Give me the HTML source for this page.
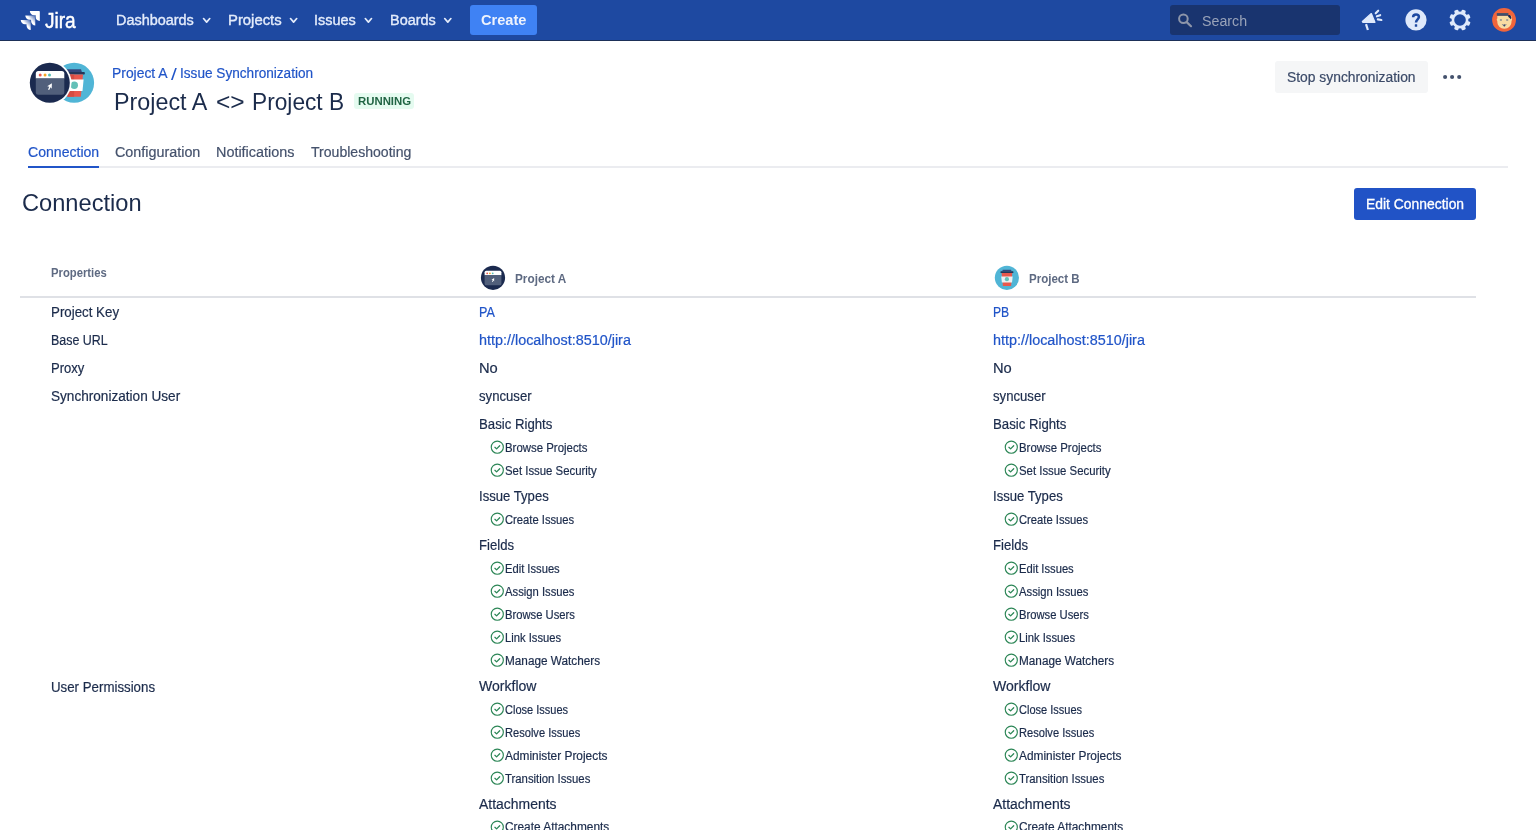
<!DOCTYPE html>
<html lang="en">
<head>
<meta charset="utf-8">
<title>Project A &lt;&gt; Project B - Issue Synchronization - Jira</title>
<style>
html,body{margin:0;padding:0;}
body{width:1536px;height:830px;overflow:hidden;background:#fff;position:relative;font-family:"Liberation Sans",sans-serif;color:#1b2b4b;font-size:14px;}
.abs{position:absolute;}
#layer{position:absolute;left:0;top:0;width:1536px;height:830px;will-change:transform;}
#nav{position:absolute;left:0;top:0;width:1536px;height:40px;background:#1e49a1;}
#navline{position:absolute;left:0;top:40px;width:1536px;height:1px;background:#1d3058;}
.t{position:absolute;display:block;margin:0;padding:0;font-weight:normal;text-decoration:none;white-space:nowrap;line-height:20px;transform-origin:0 0;}
.wrap{position:absolute;left:0;top:0;margin:0;padding:0;font-weight:normal;font-size:14px;}
.nv{color:#e4ecfb;font-size:14px;-webkit-text-stroke:0.35px #e4ecfb;}
.logo{color:#fff;font-size:22px;line-height:24px;-webkit-text-stroke:0.45px #fff;}
.cr{color:#eef3fd;font-size:14px;font-weight:bold;}
.se{color:#99a3b9;font-size:14px;}
.bc{color:#2155c8;font-size:14px;-webkit-text-stroke:0.2px #2155c8;}
.sl{font-size:16.5px;-webkit-text-stroke:0;}
.ti{font-size:24.5px;line-height:30px;color:#1b2b4b;}
.lz{font-size:11.7px;font-weight:bold;color:#216544;line-height:16px;}
.bt{font-size:14px;color:#3b4a68;-webkit-text-stroke:0.2px #3b4a68;}
.bp{font-size:14px;color:#fff;-webkit-text-stroke:0.3px #fff;}
.tba{font-size:14px;color:#2155c8;-webkit-text-stroke:0.2px #2155c8;}
.tb{font-size:14px;color:#45526c;-webkit-text-stroke:0.2px #45526c;}
.h1{font-size:24px;line-height:30px;color:#1b2b4b;}
.th{font-size:12px;font-weight:bold;color:#5e6a82;}
.h{font-size:14px;color:#1b2b4b;-webkit-text-stroke:0.2px #1b2b4b;}
.lk{font-size:14px;color:#2155c8;-webkit-text-stroke:0.2px #2155c8;}
.p{font-size:12px;color:#1b2b4b;-webkit-text-stroke:0.2px #1b2b4b;}
.ck{position:absolute;width:16px;height:16px;overflow:visible;}
</style>
</head>
<body>
<div id="nav"></div><div id="navline"></div>
<div id="layer">
<!-- Jira logo -->
<svg class="abs" style="left:20px;top:11px" width="20" height="19" viewBox="-0.9 0 25.13 24" preserveAspectRatio="none">
 <defs>
  <linearGradient id="lg1" x1="0.98" y1="0.02" x2="0.55" y2="0.45"><stop offset="0.15" stop-color="#fff" stop-opacity="0.3"/><stop offset="1" stop-color="#fff" stop-opacity="1"/></linearGradient>
 </defs>
 <path fill="#fff" d="M23.013 0H11.455a5.215 5.215 0 0 0 5.215 5.215h2.129v2.057A5.215 5.215 0 0 0 24 12.483V1.005A1.001 1.001 0 0 0 23.013 0z"/>
 <path fill="url(#lg1)" d="M17.294 5.757H5.736a5.215 5.215 0 0 0 5.215 5.214h2.129v2.058a5.218 5.218 0 0 0 5.215 5.214V6.758a1.001 1.001 0 0 0-1.001-1.001z"/>
 <path fill="url(#lg1)" d="M11.571 11.513H0a5.218 5.218 0 0 0 5.232 5.215h2.130v2.057A5.215 5.215 0 0 0 12.575 24V12.518a1.005 1.005 0 0 0-1.005-1.005z"/>
</svg>
<!-- nav chevrons -->
<svg class="abs" style="left:0;top:0" width="600" height="40" viewBox="0 0 600 40"><g fill="none" stroke="#e4ecfb" stroke-width="1.700" stroke-linecap="round" stroke-linejoin="round"><path d="M203.55 18.55L206.65 22.1L209.75 18.55"/><path d="M290.50 18.55L293.60 22.1L296.70 18.55"/><path d="M365.30 18.55L368.40 22.1L371.50 18.55"/><path d="M444.70 18.55L447.80 22.1L450.90 18.55"/></g></svg>
<!-- create button -->
<div class="abs" style="left:470px;top:5px;width:67px;height:30px;border-radius:3px;background:#3f82f4"></div>
<!-- search box -->
<div class="abs" style="left:1170px;top:5px;width:170px;height:30px;border-radius:3px;background:#19346f"></div>
<svg class="abs" style="left:1176px;top:11px" width="18" height="18" viewBox="0 0 18 18"><circle cx="7.400" cy="7.800" r="4.300" fill="none" stroke="#8d95a9" stroke-width="2"/><path d="M10.700 11.100L15 15.200" stroke="#8d95a9" stroke-width="2.200" stroke-linecap="round"/></svg>
<!-- megaphone -->
<svg class="abs" style="left:1356px;top:4px" width="32" height="32" viewBox="0 0 32 32">
 <g fill="#dfe9fb" stroke="#dfe9fb" stroke-linejoin="round" stroke-linecap="round">
  <path d="M6.400 17.400L15.300 9.600L18.900 18.300L6.800 18.300Z" stroke-width="1.300"/>
  <path d="M10 20.100L11.900 26" stroke-width="2.200" fill="none" stroke-linecap="butt"/>
  <path d="M19.700 9.300L22.200 6.700" stroke-width="2.100" fill="none"/>
  <path d="M20.900 12.300L24.200 11.200" stroke-width="2.100" fill="none"/>
  <path d="M21.800 15.400L25.400 16" stroke-width="2.100" fill="none"/>
 </g>
</svg>
<!-- help -->
<svg class="abs" style="left:1404px;top:8px" width="24" height="24" viewBox="0 0 24 24">
 <circle cx="12" cy="11.900" r="10.600" fill="#dfe9fb"/>
 <path d="M9.100 9.300C9.100 7.500 10.400 6.500 12 6.500C13.700 6.500 14.900 7.500 14.900 9C14.900 11.200 12 11.500 12 14.400" fill="none" stroke="#1e49a1" stroke-width="2.500" stroke-linecap="butt"/>
 <rect x="10.800" y="16.300" width="2.400" height="2.400" rx="0.300" fill="#1e49a1"/>
</svg>
<!-- gear -->
<svg class="abs" style="left:1448px;top:8px" width="24" height="24" viewBox="-12 -12 24 24">
 <g fill="#dfe9fb">
  <g id="teeth">
   <rect x="-2.100" y="-10.650" width="4.200" height="21.300" rx="1" transform="rotate(22.500)"/>
   <rect x="-2.100" y="-10.650" width="4.200" height="21.300" rx="1" transform="rotate(67.500)"/>
   <rect x="-2.100" y="-10.650" width="4.200" height="21.300" rx="1" transform="rotate(112.500)"/>
   <rect x="-2.100" y="-10.650" width="4.200" height="21.300" rx="1" transform="rotate(157.500)"/>
  </g>
  <circle cx="0" cy="0" r="8.400"/>
 </g>
 <circle cx="0" cy="0" r="5.800" fill="#1e49a1"/>
</svg>
<!-- user avatar -->
<svg class="abs" style="left:1492px;top:8px" width="24" height="24" viewBox="0 0 24 24">
 <circle cx="12.050" cy="11.900" r="11.900" fill="#f0653b"/>
 <path d="M5.300 7.800H19.500V10.600C20.200 10.700 20.300 12.700 19.500 12.900V13.500C19.500 17.700 16.400 20.700 12.400 20.700C8.400 20.700 5.300 17.700 5.300 13.500V12.900C4.500 12.700 4.600 10.700 5.300 10.600Z" fill="#f8dca2"/>
 <rect x="4.800" y="5.100" width="11.600" height="2.700" fill="#3d4f6d"/>
 <path d="M16.200 7H17.800C19.200 7.600 19.500 9.400 18.900 11.300L16.200 8.700Z" fill="#1b2a52"/>
 <rect x="7.900" y="11" width="2" height="2" fill="#a3a096"/>
 <rect x="14.200" y="11" width="2" height="2" fill="#a3a096"/>
 <path d="M9.800 16L12.300 19L14.800 16L13.700 16.300L12.300 17.300L10.900 16.300Z" fill="#6b7488"/>
 <rect x="11.800" y="16.300" width="1" height="1.600" fill="#2b3a5e"/>
</svg>
<!-- header avatars -->
<svg class="abs" style="left:26px;top:59px" width="72" height="48" viewBox="0 0 72 48">
 <!-- B -->
 <clipPath id="cb"><circle cx="48.100" cy="23.800" r="20"/></clipPath>
 <circle cx="48.100" cy="23.800" r="20" fill="#50b5d6"/>
 <g clip-path="url(#cb)">
  <path d="M41.200 10.200H55L55.900 12.900H40.300Z" fill="#34477c"/>
  <rect x="37.400" y="12.900" width="21.400" height="2.600" rx="0.800" fill="#243759"/>
  <path d="M39.200 15.500H57L54.800 37.700H41.400Z" fill="#e9584d"/>
  <path d="M39.200 15.500H48.100V37.700H41.400Z" fill="#d44d43"/>
  <path d="M38.600 20.500H57.600L56.500 32.100H39.700Z" fill="#fff"/>
  <circle cx="48.300" cy="26.200" r="3.700" fill="#63c0b8"/>
 </g>
 <!-- A -->
 <circle cx="23.800" cy="23.800" r="21.700" fill="#fff"/>
 <circle cx="23.800" cy="23.800" r="20" fill="#1b2a4f"/>
 <path d="M9.800 14.400a2.500 2.500 0 0 1 2.500-2.500h23.500a2.500 2.500 0 0 1 2.500 2.500V19.500H9.800Z" fill="#fff"/>
 <path d="M9.800 19.500H38.300V33.300a2.500 2.500 0 0 1-2.500 2.500H12.300a2.500 2.500 0 0 1-2.500-2.500Z" fill="#515f7b"/>
 <circle cx="14.200" cy="16.100" r="1.500" fill="#ea5a4e"/>
 <circle cx="19.050" cy="16.100" r="1.500" fill="#f5a623"/>
 <circle cx="23.500" cy="16.100" r="1.500" fill="#58c0b6"/>
 <path d="M25.900 24.200L21.200 27.200L23.300 27.700L22 30.600L23.200 30.900L24.500 28.300L25.700 29.800Z" fill="#fff"/>
</svg>
<!-- lozenge -->
<div class="abs" style="left:354px;top:93px;width:60px;height:16px;border-radius:3px;background:#e5fbf0"></div>
<!-- Stop sync button -->
<div class="abs" style="left:1275px;top:61px;width:153px;height:32px;border-radius:3px;background:#f5f6f7"></div>
<svg class="abs" style="left:1440px;top:72px" width="24" height="10" viewBox="0 0 24 10"><g fill="#44526d"><circle cx="5.100" cy="5" r="2.050"/><circle cx="12.100" cy="5" r="2.050"/><circle cx="19.200" cy="5" r="2.050"/></g></svg>
<!-- tabs line -->
<div class="abs" style="left:28px;top:166px;width:1480px;height:2px;background:#ebecf0"></div>
<div class="abs" style="left:28px;top:166px;width:71px;height:2px;background:#2155c8"></div>
<!-- Edit connection -->
<div class="abs" style="left:1354px;top:188px;width:122px;height:32px;border-radius:3px;background:#2153c6"></div>
<!-- table header avatars -->
<svg class="abs" style="left:480px;top:265px" width="26" height="26" viewBox="0 0 26 26">
 <circle cx="13" cy="12.800" r="12.100" fill="#1b2a4f"/>
 <path d="M4.600 7.300a1.500 1.500 0 0 1 1.500-1.500h13.800a1.500 1.500 0 0 1 1.500 1.500V10.300H4.600Z" fill="#fff"/>
 <path d="M4.600 10.300H21.400V18.700a1.500 1.500 0 0 1-1.500 1.500H6.100a1.500 1.500 0 0 1-1.500-1.500Z" fill="#515f7b"/>
 <circle cx="7.200" cy="8.300" r="0.900" fill="#ea5a4e"/>
 <circle cx="9.900" cy="8.300" r="0.900" fill="#f5a623"/>
 <circle cx="12.700" cy="8.300" r="0.900" fill="#58c0b6"/>
 <path d="M14.200 13.100L11.500 14.800L12.700 15.100L12 16.800L12.700 17L13.400 15.500L14.100 16.400Z" fill="#fff"/>
</svg>
<svg class="abs" style="left:994px;top:265px" width="26" height="26" viewBox="0 0 26 26">
 <circle cx="12.900" cy="12.800" r="12.100" fill="#50b5d6"/>
 <path d="M8.800 4.700H17L17.600 6.300H8.200Z" fill="#34477c"/>
 <rect x="6.500" y="6.200" width="12.900" height="1.700" rx="0.500" fill="#243759"/>
 <path d="M7.600 7.900H18.300L17.100 21.100H8.900Z" fill="#e9584d"/>
 <path d="M7.200 11.500H18.700L18 17.400H7.900Z" fill="#ecf1f4"/>
 <circle cx="12.900" cy="14.200" r="2.100" fill="#63c0b8"/>
</svg>
<!-- table header border -->
<div class="abs" style="left:20px;top:296px;width:1456px;height:2px;background:#dfe1e6"></div>

<a class="t logo" id="logo" style="left:44.80px;top:9.00px;transform:scaleX(0.8667)">Jira</a>
<a class="t nv" id="n1" style="left:116.15px;top:10.00px;transform:scaleX(1.0311)">Dashboards</a>
<a class="t nv" id="n2" style="left:227.74px;top:10.00px;transform:scaleX(1.0614)">Projects</a>
<a class="t nv" id="n3" style="left:314.12px;top:10.00px;transform:scaleX(1.0320)">Issues</a>
<a class="t nv" id="n4" style="left:389.81px;top:10.00px;transform:scaleX(1.0311)">Boards</a>
<span class="t cr" id="create" style="left:480.73px;top:10.00px;transform:scaleX(1.0425)">Create</span>
<label class="t se" id="search" style="left:1202.12px;top:11.00px;transform:scaleX(1.0162)">Search</label>
<div class="wrap"><div class="t bc" id="bc1" style="left:112.06px;top:63.00px;transform:scaleX(0.9915)">Project A</div>
<div class="t bc sl" id="bc2" style="left:170.96px;top:64.00px;transform:scaleX(1.2675)">/</div>
<div class="t bc" id="bc3" style="left:180.25px;top:63.00px;transform:scaleX(0.9720)">Issue Synchronization</div></div>
<h1 class="wrap"><span class="t ti" id="ti1" style="left:114.20px;top:87.00px;transform:scaleX(0.9513)">Project A</span>
<span class="t ti" id="ti2" style="left:215.84px;top:87.00px;transform:scaleX(1.0017)">&lt;&gt;</span>
<span class="t ti" id="ti3" style="left:251.82px;top:87.00px;transform:scaleX(0.9268)">Project B</span></h1>
<span class="t lz" id="loz" style="left:358.14px;top:93.00px;transform:scaleX(0.9734)">RUNNING</span>
<span class="t bt" id="stop" style="left:1286.82px;top:67.00px;transform:scaleX(0.9890)">Stop synchronization</span>
<a class="t tba" id="tab1" style="left:27.54px;top:142.00px;transform:scaleX(1.0048)">Connection</a>
<a class="t tb" id="tab2" style="left:114.78px;top:142.00px;transform:scaleX(1.0248)">Configuration</a>
<a class="t tb" id="tab3" style="left:215.68px;top:142.00px;transform:scaleX(1.0290)">Notifications</a>
<a class="t tb" id="tab4" style="left:310.80px;top:142.00px;transform:scaleX(1.0049)">Troubleshooting</a>
<h2 class="t h1" id="h1" style="left:22.45px;top:188.00px;transform:scaleX(0.9849)">Connection</h2>
<span class="t bp" id="edit" style="left:1365.50px;top:194.00px;transform:scaleX(0.9925)">Edit Connection</span>
<div class="t th" id="th1" style="left:51.14px;top:263.00px;transform:scaleX(0.9396)">Properties</div>
<div class="t th" id="th2" style="left:514.78px;top:269.00px;transform:scaleX(0.9820)">Project A</div>
<div class="t th" id="th3" style="left:1028.78px;top:269.00px;transform:scaleX(0.9610)">Project B</div>
<div class="t h" id="l1" style="left:51.04px;top:302.00px;transform:scaleX(0.9506)">Project Key</div>
<div class="t h" id="l2" style="left:51.04px;top:330.00px;transform:scaleX(0.8883)">Base URL</div>
<div class="t h" id="l3" style="left:51.04px;top:358.00px;transform:scaleX(0.9320)">Proxy</div>
<div class="t h" id="l4" style="left:51.20px;top:386.00px;transform:scaleX(0.9710)">Synchronization User</div>
<div class="t h" id="l5" style="left:51.02px;top:677.00px;transform:scaleX(0.9483)">User Permissions</div>
<a class="t lk" id="akey" style="left:478.84px;top:302.00px;transform:scaleX(0.8973)">PA</a>
<a class="t lk" id="aurl" style="left:478.70px;top:330.00px;transform:scaleX(1.0271)">http://localhost:8510/jira</a>
<div class="t h" id="ano" style="left:478.81px;top:358.00px;transform:scaleX(1.0474)">No</div>
<div class="t h" id="asu" style="left:479.34px;top:386.00px;transform:scaleX(0.9385)">syncuser</div>
<div class="t h" id="ag0" style="left:478.54px;top:414.00px;transform:scaleX(0.9431)">Basic Rights</div>
<div class="t p" id="ag0i0" style="left:505.05px;top:438.00px;transform:scaleX(0.9514)">Browse Projects</div>
<div class="t p" id="ag0i1" style="left:504.76px;top:461.00px;transform:scaleX(0.9481)">Set Issue Security</div>
<div class="t h" id="ag1" style="left:478.67px;top:486.00px;transform:scaleX(0.9367)">Issue Types</div>
<div class="t p" id="ag1i0" style="left:504.53px;top:510.00px;transform:scaleX(0.9342)">Create Issues</div>
<div class="t h" id="ag2" style="left:479.04px;top:535.00px;transform:scaleX(0.9377)">Fields</div>
<div class="t p" id="ag2i0" style="left:504.70px;top:559.00px;transform:scaleX(0.9318)">Edit Issues</div>
<div class="t p" id="ag2i1" style="left:505.36px;top:582.00px;transform:scaleX(0.9383)">Assign Issues</div>
<div class="t p" id="ag2i2" style="left:504.70px;top:605.00px;transform:scaleX(0.9361)">Browse Users</div>
<div class="t p" id="ag2i3" style="left:504.70px;top:628.00px;transform:scaleX(0.9344)">Link Issues</div>
<div class="t p" id="ag2i4" style="left:504.70px;top:651.00px;transform:scaleX(0.9808)">Manage Watchers</div>
<div class="t h" id="ag3" style="left:479.36px;top:676.00px;transform:scaleX(1.0034)">Workflow</div>
<div class="t p" id="ag3i0" style="left:504.53px;top:700.00px;transform:scaleX(0.9175)">Close Issues</div>
<div class="t p" id="ag3i1" style="left:504.70px;top:723.00px;transform:scaleX(0.9240)">Resolve Issues</div>
<div class="t p" id="ag3i2" style="left:504.86px;top:746.00px;transform:scaleX(0.9906)">Administer Projects</div>
<div class="t p" id="ag3i3" style="left:505.12px;top:769.00px;transform:scaleX(0.9454)">Transition Issues</div>
<div class="t h" id="ag4" style="left:479.31px;top:794.00px;transform:scaleX(0.9956)">Attachments</div>
<div class="t p" id="ag4i0" style="left:505.03px;top:817.00px;transform:scaleX(0.9888)">Create Attachments</div>
<a class="t lk" id="bkey" style="left:992.88px;top:302.00px;transform:scaleX(0.8685)">PB</a>
<a class="t lk" id="burl" style="left:992.70px;top:330.00px;transform:scaleX(1.0271)">http://localhost:8510/jira</a>
<div class="t h" id="bno" style="left:992.81px;top:358.00px;transform:scaleX(1.0474)">No</div>
<div class="t h" id="bsu" style="left:993.34px;top:386.00px;transform:scaleX(0.9385)">syncuser</div>
<div class="t h" id="bg0" style="left:992.54px;top:414.00px;transform:scaleX(0.9431)">Basic Rights</div>
<div class="t p" id="bg0i0" style="left:1019.05px;top:438.00px;transform:scaleX(0.9514)">Browse Projects</div>
<div class="t p" id="bg0i1" style="left:1018.76px;top:461.00px;transform:scaleX(0.9481)">Set Issue Security</div>
<div class="t h" id="bg1" style="left:992.67px;top:486.00px;transform:scaleX(0.9367)">Issue Types</div>
<div class="t p" id="bg1i0" style="left:1018.53px;top:510.00px;transform:scaleX(0.9342)">Create Issues</div>
<div class="t h" id="bg2" style="left:993.04px;top:535.00px;transform:scaleX(0.9377)">Fields</div>
<div class="t p" id="bg2i0" style="left:1018.70px;top:559.00px;transform:scaleX(0.9318)">Edit Issues</div>
<div class="t p" id="bg2i1" style="left:1019.36px;top:582.00px;transform:scaleX(0.9383)">Assign Issues</div>
<div class="t p" id="bg2i2" style="left:1018.70px;top:605.00px;transform:scaleX(0.9361)">Browse Users</div>
<div class="t p" id="bg2i3" style="left:1018.70px;top:628.00px;transform:scaleX(0.9344)">Link Issues</div>
<div class="t p" id="bg2i4" style="left:1018.70px;top:651.00px;transform:scaleX(0.9808)">Manage Watchers</div>
<div class="t h" id="bg3" style="left:993.36px;top:676.00px;transform:scaleX(1.0034)">Workflow</div>
<div class="t p" id="bg3i0" style="left:1018.53px;top:700.00px;transform:scaleX(0.9175)">Close Issues</div>
<div class="t p" id="bg3i1" style="left:1018.70px;top:723.00px;transform:scaleX(0.9240)">Resolve Issues</div>
<div class="t p" id="bg3i2" style="left:1018.86px;top:746.00px;transform:scaleX(0.9906)">Administer Projects</div>
<div class="t p" id="bg3i3" style="left:1019.12px;top:769.00px;transform:scaleX(0.9454)">Transition Issues</div>
<div class="t h" id="bg4" style="left:993.31px;top:794.00px;transform:scaleX(0.9956)">Attachments</div>
<div class="t p" id="bg4i0" style="left:1019.03px;top:817.00px;transform:scaleX(0.9888)">Create Attachments</div>
<svg class="ck" style="left:489px;top:439px" viewBox="0 0 16 16"><g transform="translate(0.80 0.70)"><circle cx="7.500" cy="7.500" r="6.050" fill="none" stroke="#2c8656" stroke-width="1.150"/><path d="M5.100 7.600L6.800 9.200L9.900 6" fill="none" stroke="#2c8656" stroke-width="1.250" stroke-linecap="round" stroke-linejoin="round"/></g></svg>
<svg class="ck" style="left:489px;top:462px" viewBox="0 0 16 16"><g transform="translate(0.80 0.70)"><circle cx="7.500" cy="7.500" r="6.050" fill="none" stroke="#2c8656" stroke-width="1.150"/><path d="M5.100 7.600L6.800 9.200L9.900 6" fill="none" stroke="#2c8656" stroke-width="1.250" stroke-linecap="round" stroke-linejoin="round"/></g></svg>
<svg class="ck" style="left:489px;top:511px" viewBox="0 0 16 16"><g transform="translate(0.80 0.70)"><circle cx="7.500" cy="7.500" r="6.050" fill="none" stroke="#2c8656" stroke-width="1.150"/><path d="M5.100 7.600L6.800 9.200L9.900 6" fill="none" stroke="#2c8656" stroke-width="1.250" stroke-linecap="round" stroke-linejoin="round"/></g></svg>
<svg class="ck" style="left:489px;top:560px" viewBox="0 0 16 16"><g transform="translate(0.80 0.70)"><circle cx="7.500" cy="7.500" r="6.050" fill="none" stroke="#2c8656" stroke-width="1.150"/><path d="M5.100 7.600L6.800 9.200L9.900 6" fill="none" stroke="#2c8656" stroke-width="1.250" stroke-linecap="round" stroke-linejoin="round"/></g></svg>
<svg class="ck" style="left:489px;top:583px" viewBox="0 0 16 16"><g transform="translate(0.80 0.70)"><circle cx="7.500" cy="7.500" r="6.050" fill="none" stroke="#2c8656" stroke-width="1.150"/><path d="M5.100 7.600L6.800 9.200L9.900 6" fill="none" stroke="#2c8656" stroke-width="1.250" stroke-linecap="round" stroke-linejoin="round"/></g></svg>
<svg class="ck" style="left:489px;top:606px" viewBox="0 0 16 16"><g transform="translate(0.80 0.70)"><circle cx="7.500" cy="7.500" r="6.050" fill="none" stroke="#2c8656" stroke-width="1.150"/><path d="M5.100 7.600L6.800 9.200L9.900 6" fill="none" stroke="#2c8656" stroke-width="1.250" stroke-linecap="round" stroke-linejoin="round"/></g></svg>
<svg class="ck" style="left:489px;top:629px" viewBox="0 0 16 16"><g transform="translate(0.80 0.70)"><circle cx="7.500" cy="7.500" r="6.050" fill="none" stroke="#2c8656" stroke-width="1.150"/><path d="M5.100 7.600L6.800 9.200L9.900 6" fill="none" stroke="#2c8656" stroke-width="1.250" stroke-linecap="round" stroke-linejoin="round"/></g></svg>
<svg class="ck" style="left:489px;top:652px" viewBox="0 0 16 16"><g transform="translate(0.80 0.70)"><circle cx="7.500" cy="7.500" r="6.050" fill="none" stroke="#2c8656" stroke-width="1.150"/><path d="M5.100 7.600L6.800 9.200L9.900 6" fill="none" stroke="#2c8656" stroke-width="1.250" stroke-linecap="round" stroke-linejoin="round"/></g></svg>
<svg class="ck" style="left:489px;top:701px" viewBox="0 0 16 16"><g transform="translate(0.80 0.70)"><circle cx="7.500" cy="7.500" r="6.050" fill="none" stroke="#2c8656" stroke-width="1.150"/><path d="M5.100 7.600L6.800 9.200L9.900 6" fill="none" stroke="#2c8656" stroke-width="1.250" stroke-linecap="round" stroke-linejoin="round"/></g></svg>
<svg class="ck" style="left:489px;top:724px" viewBox="0 0 16 16"><g transform="translate(0.80 0.70)"><circle cx="7.500" cy="7.500" r="6.050" fill="none" stroke="#2c8656" stroke-width="1.150"/><path d="M5.100 7.600L6.800 9.200L9.900 6" fill="none" stroke="#2c8656" stroke-width="1.250" stroke-linecap="round" stroke-linejoin="round"/></g></svg>
<svg class="ck" style="left:489px;top:747px" viewBox="0 0 16 16"><g transform="translate(0.80 0.70)"><circle cx="7.500" cy="7.500" r="6.050" fill="none" stroke="#2c8656" stroke-width="1.150"/><path d="M5.100 7.600L6.800 9.200L9.900 6" fill="none" stroke="#2c8656" stroke-width="1.250" stroke-linecap="round" stroke-linejoin="round"/></g></svg>
<svg class="ck" style="left:489px;top:770px" viewBox="0 0 16 16"><g transform="translate(0.80 0.70)"><circle cx="7.500" cy="7.500" r="6.050" fill="none" stroke="#2c8656" stroke-width="1.150"/><path d="M5.100 7.600L6.800 9.200L9.900 6" fill="none" stroke="#2c8656" stroke-width="1.250" stroke-linecap="round" stroke-linejoin="round"/></g></svg>
<svg class="ck" style="left:489px;top:819px" viewBox="0 0 16 16"><g transform="translate(0.80 0.70)"><circle cx="7.500" cy="7.500" r="6.050" fill="none" stroke="#2c8656" stroke-width="1.150"/><path d="M5.100 7.600L6.800 9.200L9.900 6" fill="none" stroke="#2c8656" stroke-width="1.250" stroke-linecap="round" stroke-linejoin="round"/></g></svg>
<svg class="ck" style="left:1003px;top:439px" viewBox="0 0 16 16"><g transform="translate(0.80 0.70)"><circle cx="7.500" cy="7.500" r="6.050" fill="none" stroke="#2c8656" stroke-width="1.150"/><path d="M5.100 7.600L6.800 9.200L9.900 6" fill="none" stroke="#2c8656" stroke-width="1.250" stroke-linecap="round" stroke-linejoin="round"/></g></svg>
<svg class="ck" style="left:1003px;top:462px" viewBox="0 0 16 16"><g transform="translate(0.80 0.70)"><circle cx="7.500" cy="7.500" r="6.050" fill="none" stroke="#2c8656" stroke-width="1.150"/><path d="M5.100 7.600L6.800 9.200L9.900 6" fill="none" stroke="#2c8656" stroke-width="1.250" stroke-linecap="round" stroke-linejoin="round"/></g></svg>
<svg class="ck" style="left:1003px;top:511px" viewBox="0 0 16 16"><g transform="translate(0.80 0.70)"><circle cx="7.500" cy="7.500" r="6.050" fill="none" stroke="#2c8656" stroke-width="1.150"/><path d="M5.100 7.600L6.800 9.200L9.900 6" fill="none" stroke="#2c8656" stroke-width="1.250" stroke-linecap="round" stroke-linejoin="round"/></g></svg>
<svg class="ck" style="left:1003px;top:560px" viewBox="0 0 16 16"><g transform="translate(0.80 0.70)"><circle cx="7.500" cy="7.500" r="6.050" fill="none" stroke="#2c8656" stroke-width="1.150"/><path d="M5.100 7.600L6.800 9.200L9.900 6" fill="none" stroke="#2c8656" stroke-width="1.250" stroke-linecap="round" stroke-linejoin="round"/></g></svg>
<svg class="ck" style="left:1003px;top:583px" viewBox="0 0 16 16"><g transform="translate(0.80 0.70)"><circle cx="7.500" cy="7.500" r="6.050" fill="none" stroke="#2c8656" stroke-width="1.150"/><path d="M5.100 7.600L6.800 9.200L9.900 6" fill="none" stroke="#2c8656" stroke-width="1.250" stroke-linecap="round" stroke-linejoin="round"/></g></svg>
<svg class="ck" style="left:1003px;top:606px" viewBox="0 0 16 16"><g transform="translate(0.80 0.70)"><circle cx="7.500" cy="7.500" r="6.050" fill="none" stroke="#2c8656" stroke-width="1.150"/><path d="M5.100 7.600L6.800 9.200L9.900 6" fill="none" stroke="#2c8656" stroke-width="1.250" stroke-linecap="round" stroke-linejoin="round"/></g></svg>
<svg class="ck" style="left:1003px;top:629px" viewBox="0 0 16 16"><g transform="translate(0.80 0.70)"><circle cx="7.500" cy="7.500" r="6.050" fill="none" stroke="#2c8656" stroke-width="1.150"/><path d="M5.100 7.600L6.800 9.200L9.900 6" fill="none" stroke="#2c8656" stroke-width="1.250" stroke-linecap="round" stroke-linejoin="round"/></g></svg>
<svg class="ck" style="left:1003px;top:652px" viewBox="0 0 16 16"><g transform="translate(0.80 0.70)"><circle cx="7.500" cy="7.500" r="6.050" fill="none" stroke="#2c8656" stroke-width="1.150"/><path d="M5.100 7.600L6.800 9.200L9.900 6" fill="none" stroke="#2c8656" stroke-width="1.250" stroke-linecap="round" stroke-linejoin="round"/></g></svg>
<svg class="ck" style="left:1003px;top:701px" viewBox="0 0 16 16"><g transform="translate(0.80 0.70)"><circle cx="7.500" cy="7.500" r="6.050" fill="none" stroke="#2c8656" stroke-width="1.150"/><path d="M5.100 7.600L6.800 9.200L9.900 6" fill="none" stroke="#2c8656" stroke-width="1.250" stroke-linecap="round" stroke-linejoin="round"/></g></svg>
<svg class="ck" style="left:1003px;top:724px" viewBox="0 0 16 16"><g transform="translate(0.80 0.70)"><circle cx="7.500" cy="7.500" r="6.050" fill="none" stroke="#2c8656" stroke-width="1.150"/><path d="M5.100 7.600L6.800 9.200L9.900 6" fill="none" stroke="#2c8656" stroke-width="1.250" stroke-linecap="round" stroke-linejoin="round"/></g></svg>
<svg class="ck" style="left:1003px;top:747px" viewBox="0 0 16 16"><g transform="translate(0.80 0.70)"><circle cx="7.500" cy="7.500" r="6.050" fill="none" stroke="#2c8656" stroke-width="1.150"/><path d="M5.100 7.600L6.800 9.200L9.900 6" fill="none" stroke="#2c8656" stroke-width="1.250" stroke-linecap="round" stroke-linejoin="round"/></g></svg>
<svg class="ck" style="left:1003px;top:770px" viewBox="0 0 16 16"><g transform="translate(0.80 0.70)"><circle cx="7.500" cy="7.500" r="6.050" fill="none" stroke="#2c8656" stroke-width="1.150"/><path d="M5.100 7.600L6.800 9.200L9.900 6" fill="none" stroke="#2c8656" stroke-width="1.250" stroke-linecap="round" stroke-linejoin="round"/></g></svg>
<svg class="ck" style="left:1003px;top:819px" viewBox="0 0 16 16"><g transform="translate(0.80 0.70)"><circle cx="7.500" cy="7.500" r="6.050" fill="none" stroke="#2c8656" stroke-width="1.150"/><path d="M5.100 7.600L6.800 9.200L9.900 6" fill="none" stroke="#2c8656" stroke-width="1.250" stroke-linecap="round" stroke-linejoin="round"/></g></svg>
</div>
</body>
</html>
